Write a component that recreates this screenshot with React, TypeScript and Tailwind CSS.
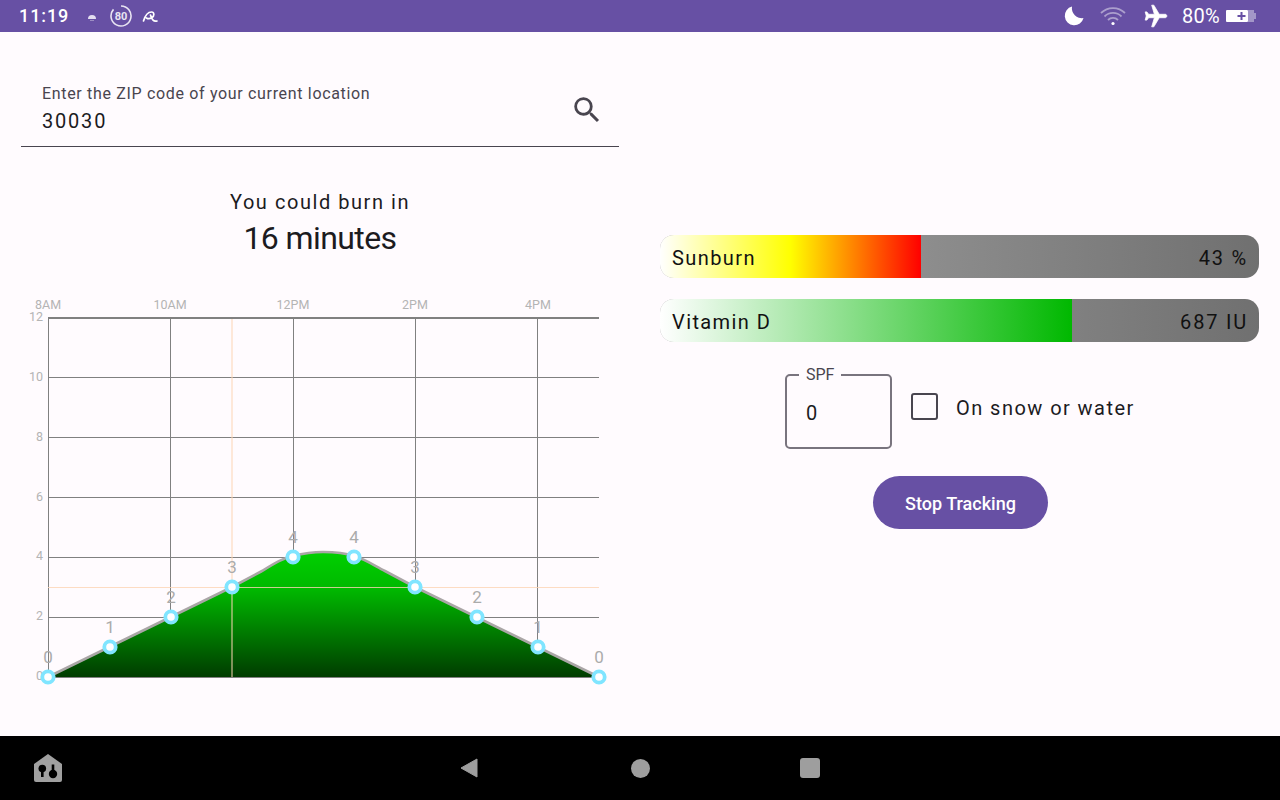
import React from 'react';

const hLines = [377, 437, 497, 557, 617, 677];
const vLines = [48, 170, 293, 415, 537];
const xLabels = [
  { x: 48, t: '8AM' },
  { x: 170, t: '10AM' },
  { x: 293, t: '12PM' },
  { x: 415, t: '2PM' },
  { x: 538, t: '4PM' },
];
const yLabels = [
  { y: 317, t: '12' },
  { y: 377, t: '10' },
  { y: 437, t: '8' },
  { y: 497, t: '6' },
  { y: 556, t: '4' },
  { y: 616, t: '2' },
  { y: 676, t: '0' },
];
const points = [
  { x: 48, y: 677, v: 0 },
  { x: 110, y: 647, v: 1 },
  { x: 171, y: 617, v: 2 },
  { x: 232, y: 587, v: 3 },
  { x: 293, y: 557, v: 4 },
  { x: 354, y: 557, v: 4 },
  { x: 415, y: 587, v: 3 },
  { x: 477, y: 617, v: 2 },
  { x: 538, y: 647, v: 1 },
  { x: 599, y: 677, v: 0 },
];

const curve =
  'M48 677 L232 587 L262 571 C275 563 283 558 293 556 C305 553 315 552 323 552 C333 552 345 553 354 556 C365 559 375 566 385 571 L415 587 L599 677';

const UvChart: React.FC = () => (
  <svg viewBox="0 290 640 400" className="block w-[640px] h-[400px]">
    <defs>
      <linearGradient id="uvFill" x1="0" y1="552" x2="0" y2="677" gradientUnits="userSpaceOnUse">
        <stop offset="0" stopColor="#00d000" />
        <stop offset="0.3" stopColor="#00b800" />
        <stop offset="1" stopColor="#003c00" />
      </linearGradient>
    </defs>
    <line x1="48" x2="599" y1="318" y2="318" stroke="#808080" strokeWidth="2" />
    {hLines.map((y) => (
      <line key={y} x1="48" x2="599" y1={y + 0.5} y2={y + 0.5} stroke="#808080" strokeWidth="1" />
    ))}
    {vLines.map((x) => (
      <line key={x} x1={x + 0.5} x2={x + 0.5} y1="318" y2="677" stroke="#808080" strokeWidth="1" />
    ))}
    <path d={`${curve} Z`} fill="url(#uvFill)" />
    <line x1="48" x2="599" y1="677.5" y2="677.5" stroke="#808080" strokeWidth="1" />
    <path d={curve} fill="none" stroke="#aaa6a6" strokeWidth="2.6" />
    <line x1="232" x2="232" y1="319" y2="677" stroke="#fdd5b4" strokeOpacity="0.5" strokeWidth="2" />
    <line x1="48" x2="599" y1="587.5" y2="587.5" stroke="#fdd5b4" strokeOpacity="0.8" strokeWidth="1" />
    {xLabels.map((l) => (
      <text key={l.t} x={l.x} y="309" textAnchor="middle" fontSize="12.5" fill="#b4b4b4">
        {l.t}
      </text>
    ))}
    {yLabels.map((l) => (
      <text key={l.t} x="43" y={l.y + 4} textAnchor="end" fontSize="12.5" fill="#b4b4b4">
        {l.t}
      </text>
    ))}
    {points.map((p) => (
      <g key={p.x}>
        <text x={p.x} y={p.y - 14} textAnchor="middle" fontSize="17" fill="#ababab">
          {p.v}
        </text>
        <circle cx={p.x} cy={p.y} r="5.7" fill="#ffffff" stroke="#80e5ff" strokeWidth="3.8" />
      </g>
    ))}
  </svg>
);

const MeterBar: React.FC<{ label: string; value: string; percent: number; fill: string }> = ({
  label,
  value,
  percent,
  fill,
}) => (
  <div className="relative w-[599px] h-[43px] rounded-[14px] overflow-hidden bg-[linear-gradient(to_right,#a4a4a4,#707070)] flex items-center justify-between pl-3 pr-[11px] pt-[2px] text-[20px] text-[#111]">
    <div className={`absolute left-0 top-0 bottom-0 ${fill}`} style={{ width: `${percent}%` }} />
    <span className="relative tracking-[1.4px]">{label}</span>
    <span className="relative tracking-[1.8px]">{value}</span>
  </div>
);

const StatusBar: React.FC = () => (
  <div className="h-8 bg-[#6750a4] flex items-center text-white shrink-0">
    <span className="ml-[19px] text-[18px] tracking-[0.9px] font-medium leading-none">11:19</span>
    <svg viewBox="0 0 12 8" className="ml-[17px] w-3 h-2 mt-[1px]">
      <path d="M2 6 A4 4 0 0 1 10 6 Z" fill="#f1edf8" opacity="0.9" />
      <path d="M4 7.5h4" stroke="#ffffff" strokeOpacity="0.35" />
    </svg>
    <svg viewBox="0 0 22 22" className="ml-[12px] w-[22px] h-[22px]">
      <path d="M11 1 A10 10 0 1 1 3.5 4.4" fill="none" stroke="#e8e4f2" strokeWidth="1.6" />
      <text x="11" y="15" textAnchor="middle" fontSize="11" fontWeight="700" fill="#e8e4f2">
        80
      </text>
    </svg>
    <svg viewBox="0 0 16 14" className="ml-[10px] w-4 h-[14px] mt-[2px]">
      <path
        d="M1.5 11 C3 6 6 2 9.5 2 C12.5 2 12.5 6 10 7.5 C8.5 8.5 6 9 4.5 8 M8.5 5 C9.5 9 11.5 12 15 11"
        fill="none"
        stroke="#ffffff"
        strokeWidth="1.7"
        strokeLinecap="round"
      />
    </svg>
    <svg viewBox="0 0 20 20" className="ml-auto w-5 h-5">
      <path d="M8 0.5 A9.5 9.5 0 1 0 19.5 12 A10 10 0 0 1 8 0.5 Z" fill="#ffffff" />
    </svg>
    <svg viewBox="0 0 26 20" className="ml-[16px] w-[26px] h-5" fill="none" stroke="#ffffff" strokeOpacity="0.45" strokeWidth="1.8">
      <path d="M1 7 A17 17 0 0 1 25 7" />
      <path d="M4.5 10.5 A12 12 0 0 1 21.5 10.5" />
      <path d="M8 14 A7 7 0 0 1 18 14" />
      <circle cx="13" cy="17.5" r="1.6" fill="#ffffff" fillOpacity="1" stroke="none" />
    </svg>
    <svg viewBox="0 0 24 24" className="ml-[17px] w-[26px] h-[26px]">
      <path
        fill="#ffffff"
        stroke="#ffffff"
        strokeWidth="0.7"
        d="M22 12c0-1-.8-1.6-1.6-1.6H15L10 2H8l2.5 8.4H5.2L3.6 8.2H2l1 3.8-1 3.8h1.6l1.6-2.2h5.3L8 22h2l5-8.4h5.4c.8 0 1.6-.6 1.6-1.6z"
      />
    </svg>
    <span className="ml-[13px] text-[20px] leading-none tracking-[0.3px]">80%</span>
    <svg viewBox="0 0 30 14" className="ml-[6px] mr-[24px] w-[30px] h-[14px]">
      <rect x="0" y="1" width="22" height="12" rx="1" fill="#ffffff" />
      <rect x="22" y="1" width="6" height="12" fill="#ffffff" opacity="0.4" />
      <rect x="28" y="4" width="2" height="6" fill="#ffffff" opacity="0.4" />
      <path d="M15.5 3v8M11.5 7h8" stroke="#6750a4" strokeWidth="2" />
    </svg>
  </div>
);

const NavBar: React.FC = () => (
  <div className="h-16 bg-black flex items-center shrink-0">
    <svg viewBox="0 0 28 28" className="ml-[34px] w-7 h-7">
      <path d="M14 0 L28 10 V26 a2 2 0 0 1 -2 2 H2 a2 2 0 0 1 -2 -2 V10 Z" fill="#a0a0a0" />
      <circle cx="8.3" cy="14.5" r="3.8" fill="#000" />
      <rect x="7" y="15" width="2.6" height="8" fill="#000" />
      <circle cx="19" cy="20" r="4.2" fill="#000" />
      <rect x="17.7" y="10.5" width="2.6" height="8" fill="#000" />
    </svg>
    <svg viewBox="0 0 18 20" className="ml-[398px] w-[18px] h-5">
      <path d="M17 1 V19 L1 10 Z" fill="#9e9e9e" stroke="#9e9e9e" strokeLinejoin="round" />
    </svg>
    <div className="ml-[153px] w-[19px] h-[19px] rounded-full bg-[#9e9e9e]" />
    <div className="ml-[150px] w-5 h-5 rounded-[3px] bg-[#9e9e9e]" />
  </div>
);

const App: React.FC = () => (
  <div className="w-[1280px] h-[800px] flex flex-col overflow-hidden bg-[#fffbfe] font-['Roboto',sans-serif]">
    <StatusBar />
    <div className="flex-1 flex">
      <div className="w-[640px] pt-[34px]">
        <div className="mx-[21px] h-[81px] border-b border-[#49454f] flex items-center justify-between pl-[21px] pr-[15px]">
          <div className="pt-[10px]">
            <div className="text-[16px] leading-5 tracking-[0.67px] text-[#49454f]">
              Enter the ZIP code of your current location
            </div>
            <div className="text-[20px] leading-[34px] tracking-[1.8px] text-[#1c1b1f]">30030</div>
          </div>
          <svg viewBox="0 0 24 24" className="w-[34px] h-[34px] mt-[8px]">
            <path
              fill="#49454f"
              d="M15.5 14h-.79l-.28-.27A6.471 6.471 0 0 0 16 9.5 6.5 6.5 0 1 0 9.5 16c1.61 0 3.09-.59 4.23-1.57l.27.28v.79l5 4.99L20.49 19l-4.99-5zm-6 0C7.01 14 5 11.99 5 9.5S7.01 5 9.5 5 14 7.01 14 9.5 11.99 14 9.5 14z"
            />
          </svg>
        </div>
        <div className="mt-[41px] text-center text-[20px] leading-7 tracking-[1.55px] text-[#1c1b1f]">You could burn in</div>
        <div className="mt-[2px] text-center text-[32px] leading-10 tracking-[-0.6px] text-[#1c1b1f]">16 minutes</div>
        <div className="mt-[32px]">
          <UvChart />
        </div>
      </div>
      <div className="w-[640px] flex flex-col items-start pl-5 pt-[203px]">
        <MeterBar
          label="Sunburn"
          value="43 %"
          percent={43.5}
          fill="bg-[linear-gradient(to_right,#ffffff,#ffff00,#ff0000)]"
        />
        <div className="mt-[21px]">
          <MeterBar
            label="Vitamin D"
            value="687 IU"
            percent={68.8}
            fill="bg-[linear-gradient(to_right,#ffffff,#00b800)]"
          />
        </div>
        <div className="mt-[32px] ml-[125px] flex items-start">
          <div className="relative w-[107px] h-[75px] border-2 border-[#79747e] rounded-[5px] flex items-center pl-[19px] pt-[2px] text-[20px] text-[#1c1b1f]">
            <span className="absolute -top-[11px] left-[12px] px-[7px] bg-[#fffbfe] text-[16px] leading-[20px] text-[#49454f]">
              SPF
            </span>
            0
          </div>
          <div className="ml-[19px] mt-[19px] w-[27px] h-[27px] border-2 border-[#49454f] rounded-[3px]" />
          <div className="ml-[18px] mt-[19px] text-[20px] leading-[30px] tracking-[1.45px] text-[#1c1b1f]">
            On snow or water
          </div>
        </div>
        <button className="mt-[27px] ml-[213px] w-[175px] h-[53px] pt-[1px] rounded-full bg-[#6750a4] text-white text-[18px] font-medium">
          Stop Tracking
        </button>
      </div>
    </div>
    <NavBar />
  </div>
);

export default App;
